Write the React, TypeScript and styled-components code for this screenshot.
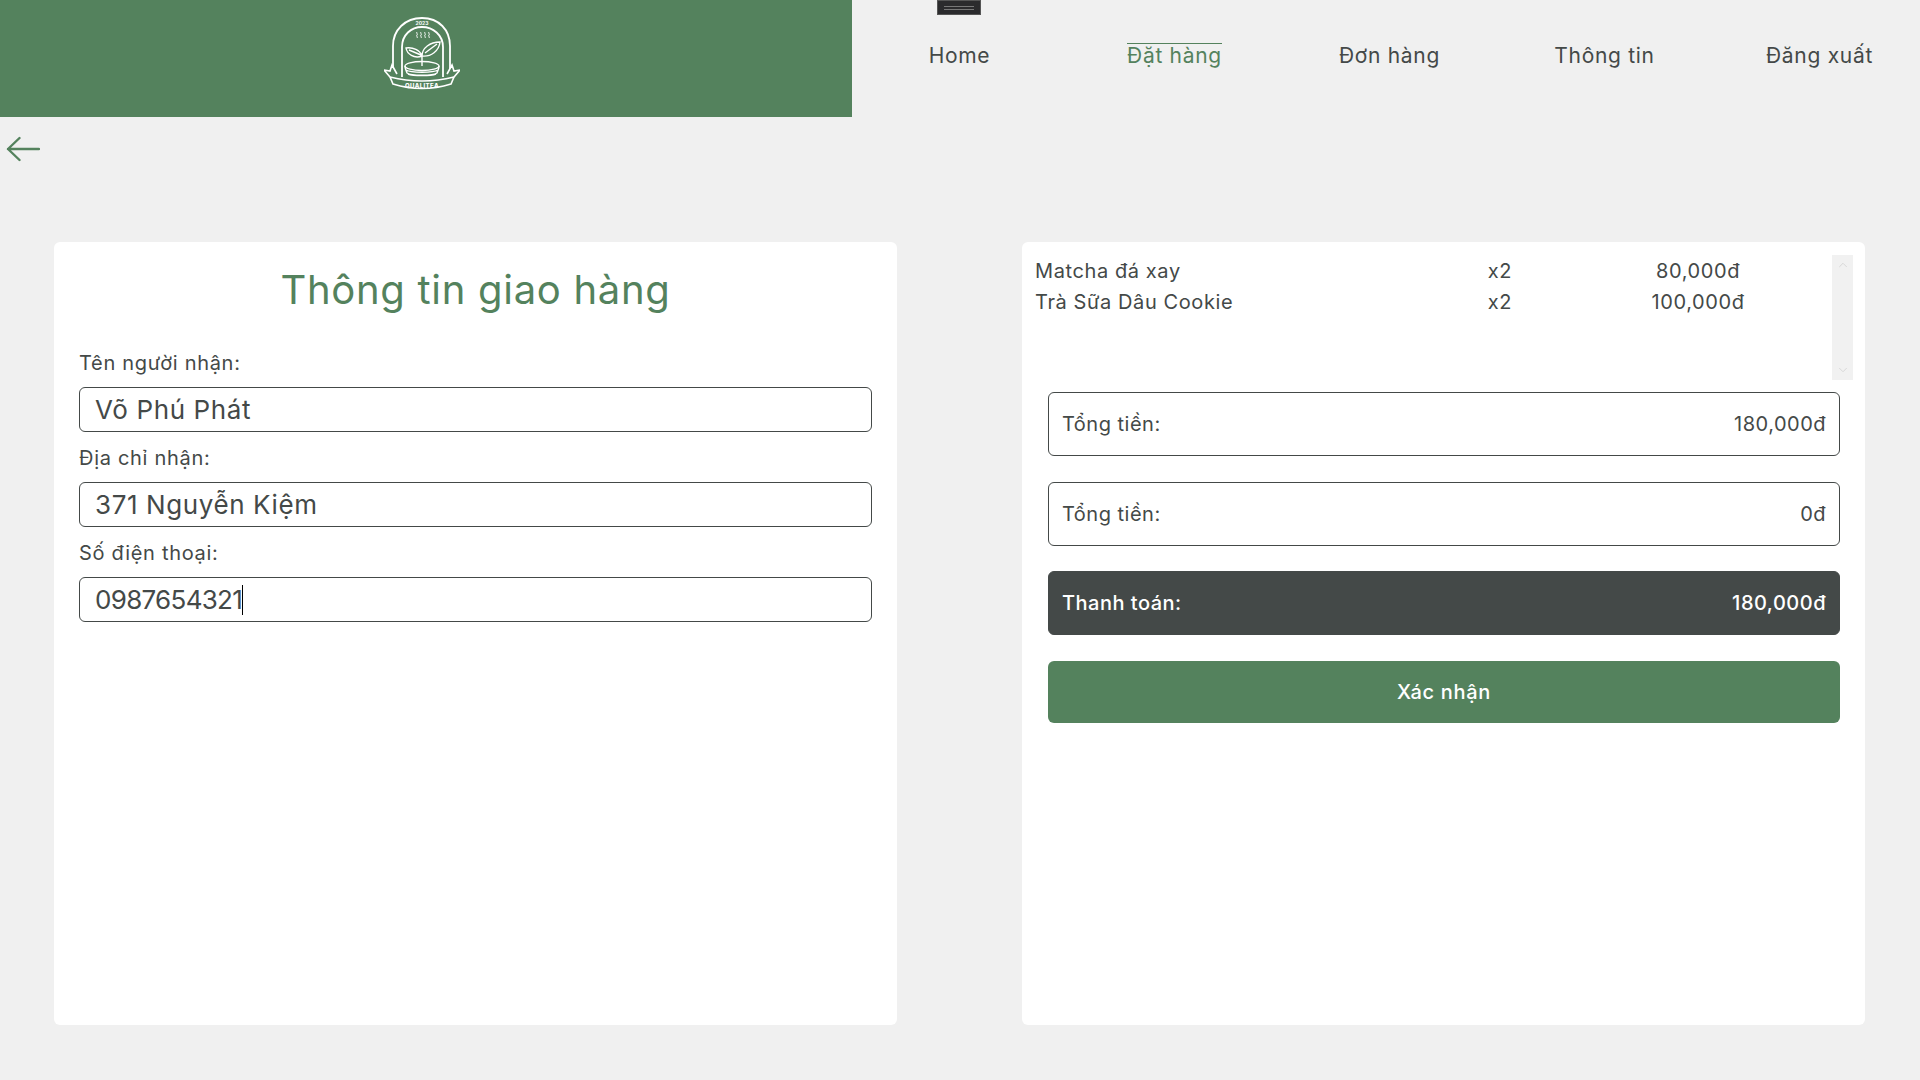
import styled, { createGlobalStyle } from 'styled-components';
import { ChevronDown, ChevronUp } from 'lucide-react';

const GREEN = '#54825d';
const DARK = '#444948';
const FONT = "Inter, 'Noto Sans', 'Liberation Sans', sans-serif";

const GlobalStyle = createGlobalStyle`
  * {
    box-sizing: border-box;
  }

  html, body {
    margin: 0;
    width: 1920px;
    height: 1080px;
    overflow: hidden;
    background-color: #f0f0f0;
    font-family: ${FONT};
    color: ${DARK};
  }
`;

const NAV_ITEMS = ['Home', 'Đặt hàng', 'Đơn hàng', 'Thông tin', 'Đăng xuất'];

const FIELDS = [
  { label: 'Tên người nhận:', value: 'Võ Phú Phát' },
  { label: 'Địa chỉ nhận:', value: '371 Nguyễn Kiệm' },
  { label: 'Số điện thoại:', value: '0987654321', focused: true },
];

const ORDER_ITEMS = [
  { name: 'Matcha đá xay', quantity: 'x2', price: '80,000đ' },
  { name: 'Trà Sữa Dâu Cookie', quantity: 'x2', price: '100,000đ' },
];

const Logo = () => (
  <svg width="76" height="76" viewBox="0 0 76 76" fill="none" stroke="#fff" strokeWidth="1.4">
    <path d="M9 58V29C9 13 21 1 38 1s28 12 28 28v29" strokeWidth="1.8" />
    <path d="M18 60V30C18 18 27 10 38 10s21 8 21 20v30" strokeWidth="1.8" />
    <path d="M33 15c-1.200 1 1.200 2 0 3s1.200 2 0 3M37 15c-1.200 1 1.200 2 0 3s1.200 2 0 3M41 15c-1.200 1 1.200 2 0 3s1.200 2 0 3M45 15c-1.200 1 1.200 2 0 3s1.200 2 0 3" strokeWidth="1" />
    <path d="M38 39c-2-6-9-9-16-8 1 6 8 11 16 8zM38 39c0-8 8-14 18-14-1 9-9 15-18 14zM38 39v10M25 33l12 5M41 36l12-9" />
    <ellipse cx="38" cy="49" rx="17" ry="4.500" />
    <path d="M21 49c0 3 1 5 2 7 4 3 26 3 30 0 1-2 2-4 2-7M22 53c5 3 27 3 32 0M24 57c5 2 23 2 28 0" />
    <path d="M6 60L0 53l6 1 2-6 5 9M70 60l6-7-6 1-2-6-5 9" fill="#54825d" strokeWidth="1.600" />
    <path d="M6 60Q38 68 70 60L67 67Q38 76 9 67Z" fill="#54825d" strokeWidth="1.600" />
    <text x="38" y="7.500" fontFamily={FONT} fontSize="5" fontWeight="700" fill="#fff" stroke="none" textAnchor="middle">
      2023
    </text>
    <text x="38" y="70.500" fontFamily={FONT} fontSize="6" fontWeight="800" letterSpacing="0.4" fill="#fff" stroke="none" textAnchor="middle">
      QUALITEA
    </text>
  </svg>
);

const BackArrow = () => (
  <svg width="34" height="26" viewBox="0 0 34 26" fill="none" stroke={GREEN} strokeWidth="2.4" strokeLinecap="round" strokeLinejoin="round">
    <path d="M2 13h31M13.500 2 2 13l11.500 11" />
  </svg>
);

const App = () => (
  <>
    <GlobalStyle />
    <Header>
      <LogoBox>
        <Logo />
      </LogoBox>
      <Nav>
        <Toggler>
          <TogglerLine />
        </Toggler>
        {NAV_ITEMS.map((item) => (
          <NavItem key={item}>
            <NavLabel $active={item === 'Đặt hàng'}>{item}</NavLabel>
          </NavItem>
        ))}
      </Nav>
    </Header>
    <BackRow>
      <BackArrow />
    </BackRow>
    <Content>
      <Card>
        <Title>Thông tin giao hàng</Title>
        <Form>
          {FIELDS.map((field) => (
            <Field key={field.label}>
              <Label>{field.label}</Label>
              <InputBox>
                <Input defaultValue={field.value} $tight={field.focused} />
                {field.focused && <Caret />}
              </InputBox>
            </Field>
          ))}
        </Form>
      </Card>
      <Card>
        <OrderList>
          <OrderRows>
            {ORDER_ITEMS.map((item) => (
              <OrderRow key={item.name}>
                <ItemName>{item.name}</ItemName>
                <ItemQuantity>{item.quantity}</ItemQuantity>
                <ItemPrice>{item.price}</ItemPrice>
              </OrderRow>
            ))}
          </OrderRows>
          <Scrollbar>
            <ChevronUp size={14} strokeWidth={1.5} />
            <ChevronDown size={14} strokeWidth={1.5} />
          </Scrollbar>
        </OrderList>
        <Summary>
          <SummaryBox>
            <span>Tổng tiền:</span>
            <span>180,000đ</span>
          </SummaryBox>
          <SummaryBox>
            <span>Tổng tiền:</span>
            <span>0đ</span>
          </SummaryBox>
          <SummaryBox $dark>
            <span>Thanh toán:</span>
            <span>180,000đ</span>
          </SummaryBox>
          <ConfirmButton>Xác nhận</ConfirmButton>
        </Summary>
      </Card>
    </Content>
  </>
);

export default App;

const Header = styled.header`
  display: flex;
  height: 117px;
`;

const LogoBox = styled.div`
  width: 852px;
  flex: none;
  display: flex;
  justify-content: center;
  padding: 17px 8px 0 0;
  background-color: ${GREEN};
`;

const Nav = styled.nav`
  position: relative;
  display: flex;
  flex: none;
  width: 1068px;
`;

const Toggler = styled.div`
  position: absolute;
  top: 0;
  left: 85px;
  width: 44px;
  height: 15px;
  display: flex;
  align-items: center;
  justify-content: center;
  background-color: #2b2b2d;
  border: 1px solid #555;
`;

const TogglerLine = styled.div`
  width: 30px;
  height: 4px;
  border-top: 1px solid #777;
  border-bottom: 1px solid #777;
`;

const NavItem = styled.div`
  flex: none;
  width: 215px;
  display: flex;
  justify-content: center;
  align-items: flex-start;
  padding-top: 44px;
`;

const NavLabel = styled.span<{ $active?: boolean }>`
  font-size: 21px;
  line-height: 24px;
  letter-spacing: 0.7px;
  color: ${({ $active }) => ($active ? GREEN : DARK)};
  box-shadow: ${({ $active }) => ($active ? `0 -1px 0 ${GREEN}` : 'none')};
`;

const BackRow = styled.div`
  height: 125px;
  padding-top: 19px;
  padding-left: 6px;
  display: flex;
  align-items: flex-start;
`;

const Content = styled.main`
  display: flex;
  gap: 125px;
  padding-left: 54px;
`;

const Card = styled.section`
  width: 843px;
  height: 783px;
  background-color: #fff;
  border-radius: 6px;
`;

const Title = styled.h1`
  margin: 0;
  padding-top: 22px;
  font-size: 40px;
  line-height: 52px;
  font-weight: 400;
  letter-spacing: 0.7px;
  text-align: center;
  color: ${GREEN};
`;

const Form = styled.div`
  display: flex;
  flex-direction: column;
  padding: 35px 25px 0;
`;

const Field = styled.div`
  display: flex;
  flex-direction: column;
`;

const Label = styled.label`
  font-size: 20px;
  line-height: 24px;
  height: 36px;
  letter-spacing: 0.7px;
`;

const InputBox = styled.div`
  position: relative;
  margin-bottom: 14px;
`;

const Input = styled.input<{ $tight?: boolean }>`
  display: block;
  width: 100%;
  height: 45px;
  padding: 0 15px;
  border: 1px solid ${DARK};
  border-radius: 6px;
  outline: none;
  background: #fff;
  font-family: ${FONT};
  font-size: 26px;
  letter-spacing: ${({ $tight }) => ($tight ? '-0.7px' : '0.6px')};
  color: ${DARK};
`;

const Caret = styled.span`
  position: absolute;
  top: 8px;
  left: 163px;
  width: 1px;
  height: 30px;
  background-color: #000;
`;

const OrderList = styled.div`
  display: flex;
  padding: 13px 12px 0 13px;
  height: 139px;
`;

const OrderRows = styled.div`
  flex: 1;
  display: flex;
  flex-direction: column;
`;

const OrderRow = styled.div`
  display: grid;
  grid-template-columns: 430px 70px 1fr;
  height: 31px;
  align-items: center;
  font-size: 20px;
  letter-spacing: 0.6px;
`;

const ItemName = styled.span`
  white-space: nowrap;
`;

const ItemQuantity = styled.span`
  text-align: center;
`;

const ItemPrice = styled.span`
  padding-left: 29px;
  text-align: center;
`;

const Scrollbar = styled.div`
  width: 21px;
  height: 125px;
  display: flex;
  flex-direction: column;
  align-items: center;
  justify-content: space-between;
  padding: 3px 0;
  background-color: #f1f1f1;
  color: #d3d3d3;
`;

const Summary = styled.div`
  display: flex;
  flex-direction: column;
  gap: 25.5px;
  padding: 11px 25px 0 26px;
`;

const SummaryBox = styled.div<{ $dark?: boolean }>`
  display: flex;
  align-items: center;
  justify-content: space-between;
  height: 64px;
  padding: 0 13px;
  border: 1px solid ${DARK};
  border-radius: 6px;
  font-size: 20px;
  letter-spacing: 0.5px;
  background-color: ${({ $dark }) => ($dark ? DARK : '#fff')};
  color: ${({ $dark }) => ($dark ? '#fff' : DARK)};
  font-weight: ${({ $dark }) => ($dark ? 500 : 400)};
`;

const ConfirmButton = styled.button`
  height: 62px;
  border: none;
  border-radius: 6px;
  background-color: ${GREEN};
  color: #fff;
  font-family: ${FONT};
  font-size: 20px;
  font-weight: 500;
  letter-spacing: 0.7px;
`;
